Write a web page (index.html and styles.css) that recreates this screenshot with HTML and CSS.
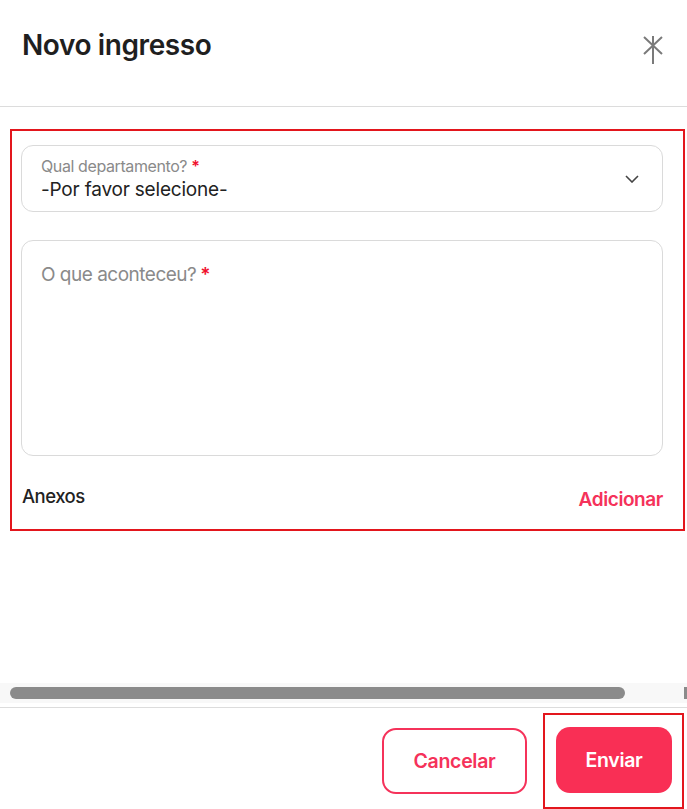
FILE: index.html
```html
<!DOCTYPE html>
<html>
<head>
    <title>Novo ingresso</title>
    <link rel="stylesheet" href="styles.css">
</head>
<body>
    <div class="modal">
        <div class="modal-header">
            <h1>Novo ingresso</h1>
            <button type="button" class="close-btn" aria-label="Fechar">
                <svg width="20" height="28" viewBox="0 0 20 28">
                    <path d="M1 1 L19 18 M19 1 L1 18 M10 0 L10 28" stroke="#7a7a7a" stroke-width="2" fill="none"/>
                </svg>
            </button>
        </div>

        <div class="modal-body">
            <form class="ticket-form" autocomplete="off">
                <div class="field select-field">
                    <span class="field-label">Qual departamento?<span class="req">*</span></span>
                    <span class="field-value">-Por favor selecione-</span>
                    <svg class="chevron" width="14" height="8" viewBox="0 0 14 8">
                        <path d="M1 1 L7 7 L13 1" stroke="#444" stroke-width="1.6" fill="none"/>
                    </svg>
                </div>

                <div class="field text-field">
                    <span class="placeholder">O que aconteceu?<span class="req">*</span></span>
                </div>

                <div class="attachments">
                    <span class="attach-title">Anexos</span>
                    <a href="#" class="attach-add">Adicionar</a>
                </div>
            </form>

            <div class="scrollbar">
                <div class="scroll-thumb"></div>
                <div class="scroll-end"></div>
            </div>
        </div>

        <div class="modal-footer">
            <button type="button" class="btn btn-outline">Cancelar</button>
            <div class="submit-wrap">
                <button type="submit" class="btn btn-primary">Enviar</button>
            </div>
        </div>
    </div>
</body>
</html>
```

FILE: styles.css
```css
body {
    font-family: Inter, "Noto Sans", Arial, sans-serif;
    margin: 0;
    padding: 0;
    background: #fff;
    color: #222;
}

.modal {
    width: 687px;
    height: 809px;
    display: flex;
    flex-direction: column;
}

.modal-header {
    box-sizing: border-box;
    height: 107px;
    padding: 28px 22px 0 22px;
    display: flex;
    justify-content: space-between;
    align-items: flex-start;
    border-bottom: 1px solid #dcdcdc;
}

h1 {
    margin: 0;
    font-size: 28px;
    font-weight: 600;
    letter-spacing: -0.4px;
    color: #1f1f1f;
}

.close-btn {
    background: none;
    border: none;
    padding: 0;
    margin: 8px 2px 0 0;
    cursor: pointer;
}

.modal-body {
    box-sizing: border-box;
    height: 601px;
    display: flex;
    flex-direction: column;
    padding-top: 22px;
}

.ticket-form {
    box-sizing: border-box;
    margin: 0 2px 0 10px;
    height: 402px;
    padding: 14px 20px 0 9px;
    border: 2px solid #e3161d;
    display: flex;
    flex-direction: column;
}

.field {
    box-sizing: border-box;
    border: 1px solid #dadada;
    border-radius: 12px;
    position: relative;
}

.select-field {
    height: 67px;
    padding: 10px 19px;
    display: flex;
    flex-direction: column;
}

.field-label {
    font-size: 16px;
    color: #8a8a8a;
    letter-spacing: -0.4px;
    line-height: 21px;
}

.req {
    color: #f0112e;
    margin-left: 4px;
    font-weight: 600;
}

.field-value {
    font-size: 19px;
    color: #222;
    line-height: 26px;
    letter-spacing: -0.2px;
}

.chevron {
    position: absolute;
    right: 23px;
    top: 29px;
}

.text-field {
    height: 216px;
    margin-top: 28px;
    padding: 22px 19px;
}

.placeholder {
    font-size: 19px;
    color: #8a8a8a;
    letter-spacing: -0.5px;
}

.attachments {
    display: flex;
    justify-content: space-between;
    align-items: flex-start;
    margin-top: 29px;
}

.attach-title {
    font-size: 18.5px;
    font-weight: 500;
    color: #222;
    letter-spacing: -0.5px;
    margin-left: 1px;
}

.attach-add {
    font-size: 19px;
    font-weight: 600;
    color: #f5325a;
    text-decoration: none;
    margin-top: 3px;
    letter-spacing: -0.4px;
}

.scrollbar {
    margin-top: auto;
    margin-bottom: 4px;
    height: 20px;
    background: #f8f8f8;
    display: flex;
    align-items: center;
    justify-content: space-between;
    padding-left: 10px;
}

.scroll-thumb {
    width: 615px;
    height: 12px;
    border-radius: 6px;
    background: #8b8b8b;
}

.scroll-end {
    width: 3px;
    height: 12px;
    background: #8b8b8b;
}

.modal-footer {
    flex: 1;
    border-top: 1px solid #dcdcdc;
    display: flex;
    justify-content: flex-end;
    align-items: flex-start;
    padding-top: 5px;
    padding-right: 3px;
}

.btn {
    font-family: Inter, "Noto Sans", Arial, sans-serif;
    font-size: 19.5px;
    font-weight: 600;
    height: 66px;
    border-radius: 14px;
    cursor: pointer;
    letter-spacing: -0.3px;
}

.btn-outline {
    width: 145px;
    margin-top: 15px;
    margin-right: 16px;
    background: #fff;
    color: #f5325a;
    border: 2px solid #f5325a;
}

.submit-wrap {
    box-sizing: border-box;
    width: 141px;
    height: 96px;
    border: 2px solid #e3161d;
    padding: 12px 10px 0 11px;
}

.btn-primary {
    width: 116px;
    background: #f92f55;
    color: #fff;
    border: none;
}
```
